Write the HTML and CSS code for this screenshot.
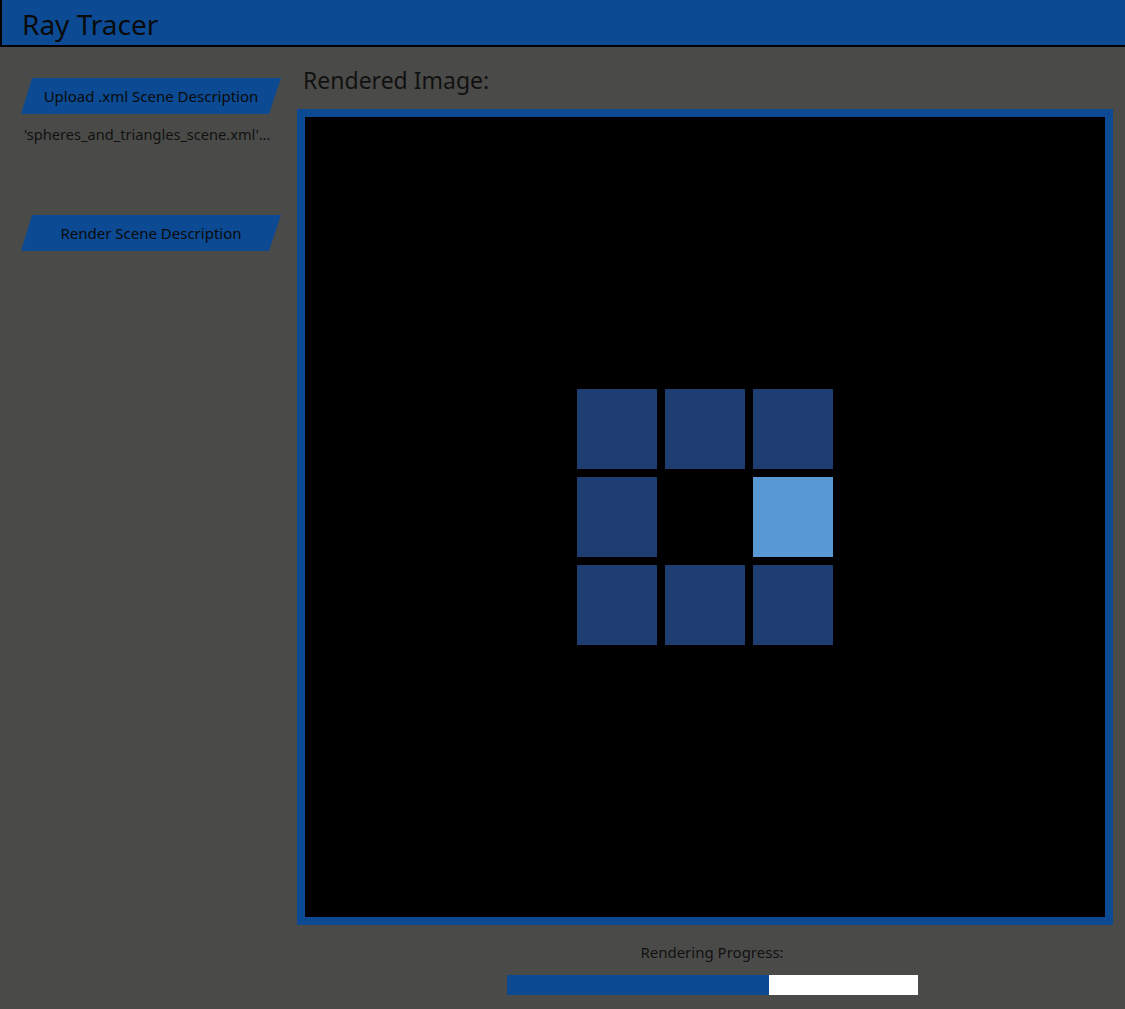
FILE: index.html
```html
<!DOCTYPE html>
<html>
<head>
<meta charset="utf-8">
<link rel="stylesheet" href="styles.css">
</head>
<body>
<header class="header"><h1 class="title">Ray Tracer</h1></header>
<div class="layout">
  <aside class="sidebar">
    <button class="btn">Upload .xml Scene Description</button>
    <div class="filename">'spheres_and_triangles_scene.xml'...</div>
    <button class="btn btn-render">Render Scene Description</button>
  </aside>
  <main class="main">
    <h2 class="label">Rendered Image:</h2>
    <div class="frame">
      <div class="canvas">
        <div class="grid">
          <div class="cell"></div><div class="cell"></div><div class="cell"></div>
          <div class="cell"></div><div class="cell empty"></div><div class="cell light"></div>
          <div class="cell"></div><div class="cell"></div><div class="cell"></div>
        </div>
      </div>
    </div>
    <div class="progress-wrap">
      <div class="progress-label">Rendering Progress:</div>
      <div class="progress"><div class="progress-fill" style="width:63.8%"></div></div>
    </div>
  </main>
</div>
</body>
</html>
```
FILE: styles.css
```css
html, body {
  margin: 0;
  padding: 0;
  background: #4a4b48;
  font-family: "Noto Sans", "Open Sans", sans-serif;
  color: #111;
}
.header {
  height: 45px;
  background: #0c4b93;
  border-left: 2px solid #000;
  border-bottom: 2px solid #000;
  display: flex;
  align-items: center;
}
.title {
  margin: 0 0 0 20px;
  font-size: 28px;
  font-weight: 400;
  color: #0a0a0a;
  line-height: 1;
  padding-top: 3px;
}
.layout {
  display: flex;
}
.sidebar {
  width: 297px;
  flex: none;
  padding-top: 31px;
  display: flex;
  flex-direction: column;
  align-items: flex-start;
}
.btn {
  margin-left: 21px;
  width: 260px;
  height: 36px;
  border: 0;
  background: #0c4b93;
  clip-path: polygon(11px 0, 100% 0, calc(100% - 12px) 100%, 0 100%);
  font-family: inherit;
  font-size: 15px;
  color: #0a0a0a;
  padding: 0;
  cursor: pointer;
}
.filename {
  margin: 11px 0 0 24px;
  font-size: 14.6px;
  color: #111;
  line-height: 18px;
}
.btn-render {
  margin-top: 72px;
}
.main {
  flex: 1;
  display: flex;
  flex-direction: column;
}
.label {
  margin: 19px 0 0 6px;
  font-size: 23px;
  font-weight: 400;
  line-height: 29px;
  color: #111;
}
.frame {
  margin-top: 14px;
  width: 800px;
  height: 800px;
  border: 8px solid #0c4b93;
}
.canvas {
  width: 800px;
  height: 800px;
  background: #000;
  display: flex;
  align-items: center;
  justify-content: center;
}
.grid {
  display: grid;
  grid-template-columns: repeat(3, 80px);
  grid-template-rows: repeat(3, 80px);
  gap: 8px;
}
.cell {
  background: #1e3d70;
}
.cell.empty {
  background: transparent;
}
.cell.light {
  background: #5899d4;
}
.progress-wrap {
  width: 830px;
  display: flex;
  flex-direction: column;
  align-items: center;
  padding-top: 17px;
}
.progress-label {
  font-size: 15px;
  line-height: 20px;
  color: #111;
}
.progress {
  margin-top: 13px;
  width: 411px;
  height: 20px;
  background: #fff;
}
.progress-fill {
  height: 100%;
  background: #0c4b93;
}
```
